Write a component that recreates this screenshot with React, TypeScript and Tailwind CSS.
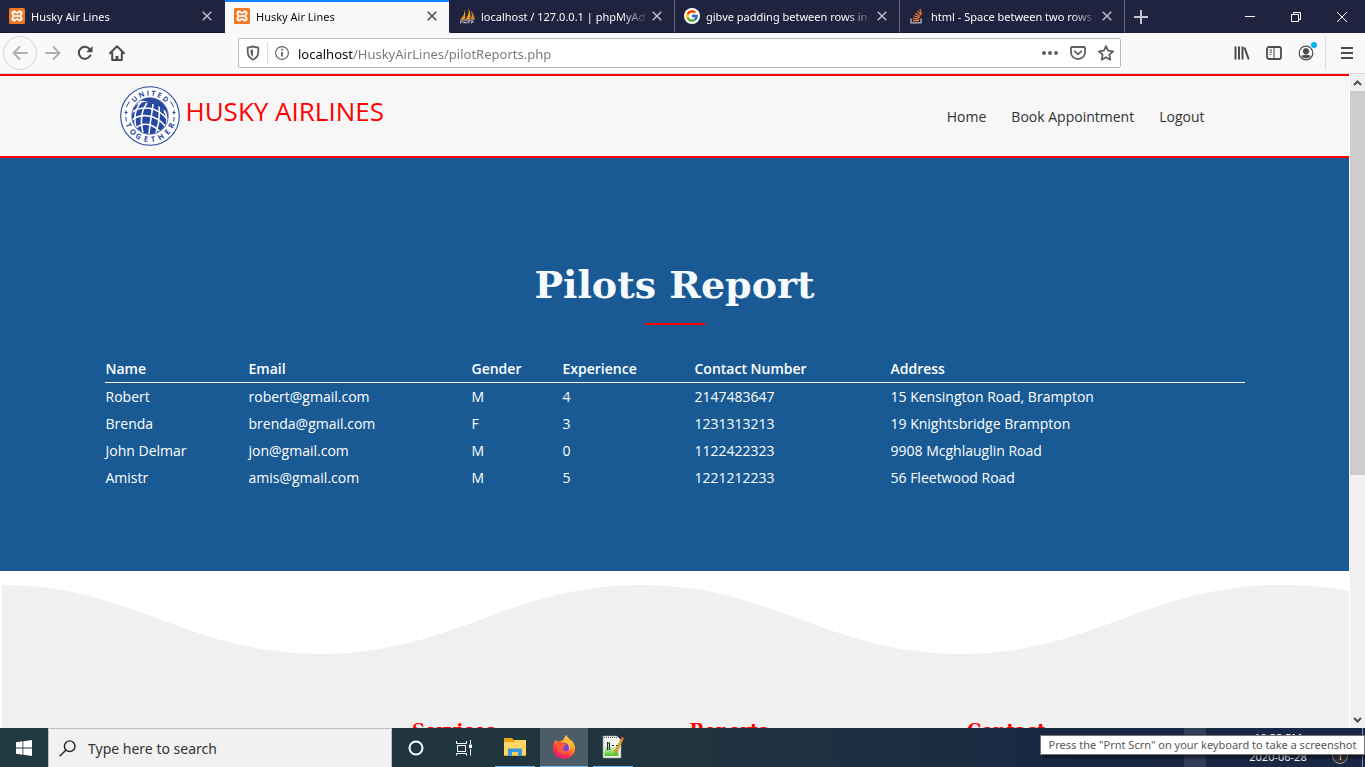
import React from 'react';
import { FcGoogle } from 'react-icons/fc';

type IconProps = { className?: string };

const XamppIcon = () => (
  <svg viewBox="0 0 16 16" className="size-4 shrink-0">
    <rect width="16" height="16" rx="1.500" fill="#f37623" />
    <path
      d="M5.300 3.600c-1.800 0-2.300 1.300-1.700 2.500.4.800 1.200 1 1.200 1.900s-.8 1.100-1.200 1.900c-.6 1.200-.1 2.500 1.700 2.500 1.500 0 1.500-1.500 2.700-1.500s1.200 1.500 2.700 1.500c1.800 0 2.300-1.300 1.700-2.500-.4-.8-1.200-1-1.200-1.900s.8-1.100 1.200-1.900c.6-1.200.1-2.500-1.700-2.500-1.500 0-1.500 1.500-2.700 1.500s-1.200-1.500-2.700-1.500z"
      fill="none"
      stroke="#fff"
      strokeWidth="2"
    />
    <path d="M6 8h4" stroke="#fff" strokeWidth="1.800" />
  </svg>
);

const PhpMyAdminIcon = () => (
  <svg viewBox="0 0 16 16" className="size-4 shrink-0">
    <path d="M5.500 1.500C6 5 4.500 8.500 1 11.500h4.700C6.500 8 6.500 4.500 5.500 1.500z" fill="#f89c0e" />
    <path d="M9.300.3c1.200 4 0 7.700-3 11.200h4.900c.5-4 .3-8-1.900-11.200z" fill="#f89c0e" />
    <path d="M11.800 2.500c1.500 3.300 1.200 6-.1 9h4c-.3-3.500-1.600-6.500-3.900-9z" fill="#c98a3c" />
    <path d="M.5 11.500h15l-1.500 1.300H2z" fill="#9b9bab" />
    <path d="M1.500 15.500v-2h1.800v1.200M5 13.500v2m0-1h2m0-1v2m2 0v-2h1.500v1.200M12.500 15.500v-2H14v1.500" stroke="#b6b6c4" fill="none" />
  </svg>
);

const StackIcon = () => (
  <svg viewBox="0 0 16 16" className="size-4 shrink-0" fill="none">
    <path d="M2 10.500v4.300h10v-4.300" stroke="#bcbbbb" strokeWidth="1.300" />
    <path d="M4 12.700h6M4.100 10.400l5.900.7M4.900 7.800l5.500 1.800M6.300 5.200l4.800 3.200M8.500 2.800l3.500 4.400M11 1l1.500 5.300" stroke="#f48024" strokeWidth="1.200" />
  </svg>
);

const CloseIcon = ({ className = '' }: IconProps) => (
  <svg viewBox="0 0 10 10" className={`size-[10px] ${className}`}>
    <path d="M.7.7l8.600 8.600M9.300.7L.7 9.300" stroke="currentColor" strokeWidth="1.500" />
  </svg>
);

const tabs = [
  { title: 'Husky Air Lines', icon: <XamppIcon /> },
  { title: 'Husky Air Lines', icon: <XamppIcon />, active: true },
  { title: 'localhost / 127.0.0.1 | phpMyAdmin', icon: <PhpMyAdminIcon /> },
  {
    title: 'gibve padding between rows in table',
    icon: (
      <span className="flex size-4 shrink-0 items-center justify-center rounded-full bg-white">
        <FcGoogle size={14} />
      </span>
    ),
  },
  { title: 'html - Space between two rows in a table', icon: <StackIcon /> },
];

const TabBar = () => (
  <div className="flex h-[33px] shrink-0 bg-[#20233f]">
    {tabs.map((tab, i) => (
      <div
        key={i}
        className={`flex w-[225px] min-w-0 items-center gap-[6px] border-b border-r pl-[9px] pr-3 ${
          tab.active
            ? 'border-b-[#f9f9fa] border-r-[#20233f] bg-[#f9f9fa] text-[#0c0c0d] shadow-[inset_0_2px_0_#0a84ff]'
            : 'border-b-[#17192e] text-[#f9f9fa]'
        } ${i > 1 ? 'border-r-[#6a6c80]' : 'border-r-[#20233f]'}`}
      >
        {tab.icon}
        <a
          href="#tab"
          className="min-w-0 flex-1 overflow-hidden whitespace-nowrap pt-px font-['Noto_Sans','Open_Sans',sans-serif] text-[11px] leading-5 [mask-image:linear-gradient(to_right,black_140px,transparent_168px)]"
        >
          {tab.title}
        </a>
        <button aria-label="Close tab" className={tab.active ? 'text-[#4a4a4f]' : 'text-[#b9bac4]'}>
          <CloseIcon />
        </button>
      </div>
    ))}
    <button aria-label="New tab" className="flex w-8 items-center justify-center text-[#c5c6cf]">
      <svg viewBox="0 0 14 14" className="size-[14px]">
        <path d="M7 0v14M0 7h14" stroke="currentColor" strokeWidth="2" />
      </svg>
    </button>
    <div className="ml-auto flex text-white">
      <button aria-label="Minimize" className="flex w-[46px] items-center justify-center">
        <svg viewBox="0 0 10 10" className="size-[10px]"><path d="M0 4.500h10" stroke="currentColor" /></svg>
      </button>
      <button aria-label="Restore" className="flex w-[46px] items-center justify-center">
        <svg viewBox="0 0 10 10" className="size-[10px]" fill="none">
          <path d="M.5 2.500h7v7h-7zM2.500 2.500v-2h7v7h-2" stroke="currentColor" />
        </svg>
      </button>
      <button aria-label="Close window" className="flex w-[46px] items-center justify-center">
        <svg viewBox="0 0 10 10" className="size-[10px]"><path d="M0 0l10 10M10 0L0 10" stroke="currentColor" /></svg>
      </button>
    </div>
  </div>
);

const Toolbar = () => (
  <div className="flex h-[41px] shrink-0 items-center border-b border-[#d8d8da] bg-[#f9f9fa] text-[#4a4a4f]">
    <div className="flex w-[238px] shrink-0 items-center pl-[3px]">
      <button aria-label="Back" className="flex size-[34px] items-center justify-center rounded-full border border-[#d4d4d6] text-[#b0b0b3]">
        <svg viewBox="0 0 16 16" className="size-4" fill="none" stroke="currentColor" strokeWidth="1.900" strokeLinecap="round" strokeLinejoin="round">
          <path d="M15 8H1.500M7.500 2l-6 6 6 6" />
        </svg>
      </button>
      <button aria-label="Forward" className="flex w-8 items-center justify-center text-[#b0b0b3]">
        <svg viewBox="0 0 16 16" className="size-4" fill="none" stroke="currentColor" strokeWidth="1.900" strokeLinecap="round" strokeLinejoin="round">
          <path d="M1 8h13.500M8.500 2l6 6-6 6" />
        </svg>
      </button>
      <button aria-label="Reload" className="flex w-8 items-center justify-center">
        <svg viewBox="0 0 16 16" className="size-4" fill="none">
          <path d="M13.200 10.500A6 6 0 1 1 12.500 4" stroke="currentColor" strokeWidth="2" strokeLinecap="round" />
          <path d="M15.500 1v6.300H9.200z" fill="currentColor" />
        </svg>
      </button>
      <button aria-label="Home" className="flex w-8 items-center justify-center">
        <svg viewBox="0 0 16 16" className="size-4" fill="none" stroke="currentColor" strokeWidth="2" strokeLinecap="round" strokeLinejoin="round">
          <path d="M1 8.200L8 1.300l7 6.900M3.200 8v7h9.600V8" />
          <path d="M8 15v-4" strokeWidth="3" strokeLinecap="butt" />
        </svg>
      </button>
    </div>
    <div className="flex h-[30px] min-w-0 flex-1 items-center rounded-[2px] border border-[#b9b9bb] bg-white text-[#5f5f64]">
      <svg viewBox="0 0 16 16" className="ml-[6px] size-4 shrink-0" fill="none">
        <path d="M8 1.500l5.300 1.100v4.500c0 3.500-2 6-5.300 7.600-3.300-1.600-5.300-4.100-5.300-7.600V2.600z" stroke="currentColor" strokeWidth="1.800" strokeLinejoin="round" />
        <path d="M8 4.500v7.200c-1.600-1-2.500-2.600-2.500-4.600V5z" fill="currentColor" />
      </svg>
      <span className="mx-[6px] h-[22px] w-px shrink-0 bg-[#dcdcde]" />
      <svg viewBox="0 0 16 16" className="size-4 shrink-0" fill="none" stroke="currentColor">
        <circle cx="8" cy="8" r="6.400" strokeWidth="1.100" />
        <path d="M8 7v4.500" strokeWidth="1.800" />
        <circle cx="8" cy="4.700" r=".6" fill="currentColor" />
      </svg>
      <input
        aria-label="Address"
        defaultValue="localhost/HuskyAirLines/pilotReports.php"
        className="ml-2 h-6 min-w-0 flex-1 bg-[linear-gradient(to_right,#0c0c0d_55px,#77777b_55px)] bg-clip-text pt-px font-['Noto_Sans','Open_Sans',sans-serif] text-[13px] text-transparent outline-none"
      />
      <div className="flex items-center gap-3 pr-[6px]">
        <button aria-label="Page actions">
          <svg viewBox="0 0 16 16" className="size-4" fill="currentColor"><circle cx="2" cy="8" r="2" /><circle cx="8" cy="8" r="2" /><circle cx="14" cy="8" r="2" /></svg>
        </button>
        <button aria-label="Save to Pocket">
          <svg viewBox="0 0 16 16" className="size-4" fill="none" stroke="currentColor" strokeWidth="1.800" strokeLinecap="round" strokeLinejoin="round">
            <path d="M2 2h12c.7 0 1 .4 1 1v4.500a7 6.500 0 0 1-14 0V3c0-.6.3-1 1-1z" /><path d="M4.800 6.300L8 9.300l3.200-3" />
          </svg>
        </button>
        <button aria-label="Bookmark">
          <svg viewBox="0 0 16 16" className="size-4" fill="none" stroke="currentColor" strokeWidth="1.800" strokeLinejoin="round">
            <path d="M8 1l2.100 4.700 5 .6-3.700 3.400.9 5.100L8 12.300l-4.300 2.500.9-5.100L.9 6.300l5-.6z" />
          </svg>
        </button>
      </div>
    </div>
    <div className="flex h-full w-[244px] shrink-0 items-center justify-end">
      <div className="flex items-center gap-4 pr-[11px]">
        <button aria-label="Library">
          <svg viewBox="0 0 16 16" className="size-4" stroke="currentColor" strokeWidth="2">
            <path d="M1.500 1.500v13M5 1.500v13M8.500 1.500v13M10.500 2.500l4.200 11.800" />
          </svg>
        </button>
        <button aria-label="Sidebars">
          <svg viewBox="0 0 16 16" className="size-4" fill="none" stroke="currentColor">
            <rect x="1" y="2" width="14" height="12" rx="2" strokeWidth="1.800" /><path d="M8 2v12M3.500 5H6M3.500 7.200H6M3.500 9.400h1.800" />
          </svg>
        </button>
        <button aria-label="Account" className="relative">
          <svg viewBox="0 0 16 16" className="size-4" fill="none" stroke="currentColor">
            <circle cx="8" cy="8" r="6.800" strokeWidth="1.200" /><circle cx="8" cy="6.300" r="2.700" fill="currentColor" /><path d="M3.800 11.300c1-1.500 7.400-1.500 8.400 0-1.500 2-6.900 2-8.400 0z" fill="currentColor" />
          </svg>
          <span className="absolute -right-[3px] -top-[3px] size-[6px] rounded-full bg-[#00b3f4]" />
        </button>
      </div>
      <span className="h-[34px] w-px bg-[#dcdcde]" />
      <button aria-label="Menu" className="flex w-[39px] items-center justify-center pl-[3px]">
        <svg viewBox="0 0 12 12" className="size-3" stroke="currentColor" strokeWidth="2"><path d="M0 1h12M0 6h12M0 11h12" /></svg>
      </button>
    </div>
  </div>
);

const Logo = () => (
  <svg viewBox="0 0 60 60" className="size-[60px] shrink-0" role="img" aria-label="United Together">
    <defs>
      <path id="arc-top" d="M9.500 30a20.500 20.500 0 0 1 41 0" />
      <path id="arc-bottom" d="M4 30a26 26 0 0 0 52 0" />
      <clipPath id="globe"><circle cx="30" cy="30" r="18" /></clipPath>
    </defs>
    <circle cx="30" cy="30" r="29.300" fill="#fff" stroke="#2747a0" strokeWidth="1.100" />
    <g fontWeight="700" fill="#2747a0" className="font-['Open_Sans',sans-serif]">
      <text fontSize="7" textAnchor="middle"><textPath href="#arc-top" startOffset="50%">U N I T E D</textPath></text>
      <text fontSize="7.500" textAnchor="middle"><textPath href="#arc-bottom" startOffset="50%">T&#160; O G&#160; E&#160; T&#160; H&#160; E&#160; R</textPath></text>
    </g>
    <path d="M9.300 15.500l-3 5.500M6 24.500v4M5.800 31l.5 4.500M50.700 15.500l3 5.500M54 24.500v4M54.200 31l-.5 4.500M4.500 26.500h3M52.500 26.500h3" stroke="#2747a0" strokeWidth="1" />
    <g clipPath="url(#globe)">
      <circle cx="30" cy="30" r="18.500" fill="#2747a0" />
      <g fill="none" stroke="#fff">
        <path d="M13 20c9-8 25-7 34 6" strokeWidth="2.200" />
        <path d="M11 27c10-8 26-7 37 7M12 34c9-7 24-6 34 7M16 42c7-6 17-5 25 5" strokeWidth="1.600" />
        <path d="M21 16c-6 7-8 17-4 29M27 17c-6 8-7 18-4 30M33 18c-1 9-3 19-4 30M39 20c1 9 0 18-3 27M44 24c4 7 4 14 0 22" strokeWidth="1.600" />
      </g>
      <path d="M18 14c12-6 28 1 30 14-7-9-17-12-30-14z" fill="#2747a0" />
    </g>
    <circle cx="30" cy="30" r="18.300" fill="none" stroke="#2747a0" strokeWidth=".7" />
  </svg>
);

const pilots = [
  ['Robert', 'robert@gmail.com', 'M', '4', '2147483647', '15 Kensington Road, Brampton'],
  ['Brenda', 'brenda@gmail.com', 'F', '3', '1231313213', '19 Knightsbridge Brampton'],
  ['John Delmar', 'jon@gmail.com', 'M', '0', '1122422323', '9908 Mcghlauglin Road'],
  ['Amistr', 'amis@gmail.com', 'M', '5', '1221212233', '56 Fleetwood Road'],
];

const Page = () => (
  <div className="min-w-0 flex-1 overflow-hidden bg-white font-['Open_Sans',sans-serif] text-[14px]">
    <header className="border-y-2 border-[#ff0000] bg-[#f7f7f7]">
      <div className="mx-auto flex h-20 max-w-[1140px] items-center justify-between pl-[15px] pr-10">
        <a href="#home" className="flex gap-[6px] text-[26px] font-medium leading-[50px] text-[#ff0000]">
          <Logo />
          HUSKY AIRLINES
        </a>
        <nav className="flex gap-[25px] text-[#333]">
          <a href="#home">Home</a>
          <a href="#book">Book Appointment</a>
          <a href="#logout">Logout</a>
        </nav>
      </div>
    </header>
    <main className="bg-[#195a94] px-4 pb-20 pt-[102px]">
      <div className="mx-auto max-w-[1140px]">
        <h1 className="text-center font-['DejaVu_Serif',serif] text-[38px] font-bold leading-[50px] text-[#f5faff]">Pilots Report</h1>
        <div className="mx-auto mt-[13px] h-[2px] w-[60px] bg-[#ff0000]" />
        <table className="mt-[30px] w-full table-fixed text-left leading-[27px] text-white">
          <colgroup>
            <col className="w-[143px]" />
            <col className="w-[223px]" />
            <col className="w-[91px]" />
            <col className="w-[132px]" />
            <col className="w-[196px]" />
            <col />
          </colgroup>
          <thead>
            <tr className="border-b border-white">
              {['Name', 'Email', 'Gender', 'Experience', 'Contact Number', 'Address'].map((h) => (
                <th key={h} className="px-px py-0 font-semibold">{h}</th>
              ))}
            </tr>
          </thead>
          <tbody>
            {pilots.map((p) => (
              <tr key={p[0]}>{p.map((c, i) => <td key={i} className="px-px py-0">{c}</td>)}</tr>
            ))}
          </tbody>
        </table>
      </div>
    </main>
    <footer>
      <svg viewBox="0 0 1349 84" preserveAspectRatio="none" className="block h-[84px] w-full">
        <path d="M2 84V14C132 14 188 83 320 83C452 83 509 14 641 14C773 14 829 83 961 83C1093 83 1149 14 1281 14C1306 14 1328 16 1349 20V84z" fill="#f0f0f0" />
      </svg>
      <div className="ml-[2px] h-60 bg-[#f0f0f0] pt-16">
        <div className="mx-auto grid max-w-[1110px] grid-cols-4 font-['DejaVu_Serif',serif] text-[18px] font-bold leading-6 text-[#ff0000]">
          <h2 className="col-start-2 pl-[14px]">Services</h2>
          <h2 className="pl-[14px]">Reports</h2>
          <h2 className="pl-[14px]">Contact</h2>
        </div>
      </div>
    </footer>
  </div>
);

const ScrollBar = () => (
  <div className="flex w-4 shrink-0 flex-col items-center border-l border-white bg-[#f0f0f0] text-[#505050]">
    <span className="flex h-[17px] items-center">
      <svg viewBox="0 0 9 6" className="h-[6px] w-[9px]" fill="none"><path d="M1 5l3.500-3.500L8 5" stroke="currentColor" strokeWidth="2" /></svg>
    </span>
    <span className="h-[384px] w-full bg-[#cdcdcd]" />
    <span className="mt-auto flex h-[17px] items-center">
      <svg viewBox="0 0 9 6" className="h-[6px] w-[9px]" fill="none"><path d="M1 1l3.500 3.500L8 1" stroke="currentColor" strokeWidth="2" /></svg>
    </span>
  </div>
);

const TaskBar = () => (
  <div className="relative flex h-[39px] shrink-0 bg-[linear-gradient(to_right,#21383f,#20353f_50%,#1a2943_75%,#1a2748)] font-['Noto_Sans','Open_Sans',sans-serif] text-white">
    <button aria-label="Start" className="flex w-12 items-center justify-center">
      <svg viewBox="0 0 16 16" className="size-4" fill="#fff"><path d="M0 2.200l6.500-.9v6.200H0zM7.300 1.200L16 0v7.500H7.300zM0 8.400h6.500v6.300L0 13.800zM7.300 8.400H16V16l-8.700-1.200z" /></svg>
    </button>
    <label className="flex w-[344px] items-center gap-3 border border-b-0 border-[#c0c0c0] bg-[#f1f1f1] pl-[10px] text-[#222]">
      <svg viewBox="0 0 17 17" className="size-[17px] shrink-0" fill="none" stroke="currentColor" strokeWidth="1.400">
        <circle cx="10.700" cy="6.200" r="5.300" /><path d="M7 10L.7 16.300" />
      </svg>
      <input aria-label="Search" placeholder="Type here to search" className="min-w-0 flex-1 bg-transparent text-[14px] outline-none placeholder:text-[#333]" />
    </label>
    <button aria-label="Cortana" className="flex w-12 items-center justify-center">
      <svg viewBox="0 0 16 16" className="size-4"><circle cx="8" cy="8" r="6.500" fill="none" stroke="#fff" strokeWidth="2" /></svg>
    </button>
    <button aria-label="Task View" className="flex w-12 items-center justify-center">
      <svg viewBox="0 0 16 16" className="size-4" fill="none" stroke="#fff">
        <path d="M.5 1v2.500h10V1M.5 15.500v-2h10v2M1.500 5.500h8v6h-8zM14.500 0v4M14.500 9v6.500" /><rect x="13.500" y="5" width="2" height="2.500" fill="#fff" />
      </svg>
    </button>
    <button aria-label="File Explorer" className="ml-[7px] mr-[5px] flex w-10 items-center justify-center border-b border-[#76b9ed]">
      <svg viewBox="0 0 22 18" className="h-[18px] w-[22px]">
        <path d="M0 0h8l2 2h12v16H0z" fill="#e8a50c" /><path d="M0 4h10l1-2h11v15H0z" fill="#fdd664" /><path d="M4 18v-7.500h14V18h-4v-4H8v4z" fill="#3a96dd" />
      </svg>
    </button>
    <button aria-label="Firefox" className="flex w-12 items-center justify-center border-b border-[#76b9ed] bg-[#4c5d67]">
      <svg viewBox="0 0 24 24" className="size-6">
        <defs>
          <linearGradient id="fox" x1=".8" y1="0" x2=".25" y2="1"><stop offset="0" stopColor="#fff14a" /><stop offset=".4" stopColor="#ff9a1f" /><stop offset=".7" stopColor="#ff3647" /><stop offset="1" stopColor="#e31587" /></linearGradient>
        </defs>
        <path d="M14.500 0c.8 2.500 3 3.500 4.500 5.500 1.500.2 4 4 4 8A11 10.500 0 0 1 1 13.500C1 10 2 7 4 4.500l1 2.300 3-.3c1-1 2.500-1.500 3.500-1.500.5-2 1.500-4 3-5z" fill="url(#fox)" />
        <circle cx="12.500" cy="12.500" r="4.600" fill="#7542e5" />
        <path d="M5 7c3-1.500 5.500 0 7 2l2.500.5c-.5 2-3 1.800-3.500 3.500-.8 2.500 2.500 4.500 5.500 2.500-1.500 4-8 4.500-10.500.5C4 13 4 10 5 7z" fill="#ff5a34" />
        <path d="M14.500 1c.5 3 4.500 5 4.500 9 0 3-1 4-2 5 .5-5-1.500-6.500-4-8 0-2 0-4 1.500-6z" fill="#ffbd3c" />
      </svg>
    </button>
    <button aria-label="Notepad++" className="ml-[5px] flex w-10 items-center justify-center border-b border-[#76b9ed]">
      <svg viewBox="0 0 22 24" className="h-6 w-[22px]">
        <defs><linearGradient id="pad" x1="0" y1="0" x2="0" y2="1"><stop offset=".4" stopColor="#f4f8ee" /><stop offset="1" stopColor="#4bc510" /></linearGradient></defs>
        <path d="M1 1h14l4 4v18H1z" fill="#f8f8f8" stroke="#85908a" strokeWidth=".7" /><path d="M2.500 4h14v17h-14z" fill="url(#pad)" />
        <path d="M2 2.500h13" stroke="#555" strokeDasharray="1 1" /><path d="M5.500 7v8M5.500 8h2v7M10 10.500h2M14 10.500h2" stroke="#263329" strokeWidth="1.200" fill="none" />
        <path d="M20 2l2 1-7 14-2.500 2 .3-3.300z" fill="#e5a923" stroke="#8d5a10" strokeWidth=".4" /><path d="M20 2l2 1-1 2-2-1z" fill="#dc5449" />
      </svg>
    </button>
    <div className="ml-auto flex">
      <span className="w-[22px] bg-white/10" />
      <div className="flex w-36 flex-col items-center justify-between py-px text-[11px] leading-[18px]">
        <span>10:38 PM</span>
        <span>2020-06-28</span>
      </div>
      <button aria-label="Notifications" className="-ml-[18px] flex w-[30px] items-end pb-[3px]">
        <span className="flex size-4 items-center justify-center rounded-full border border-[#a0a0a0] bg-[#333] text-[10px]">1</span>
      </button>
      <span className="mr-[2px] w-px bg-white/50" />
    </div>
    <div role="tooltip" className="absolute right-0 top-[7px] flex h-5 w-[325px] items-center justify-center whitespace-nowrap border border-[#767676] bg-white text-[11px] text-[#575757] shadow-[3px_3px_3px_rgba(0,0,0,0.5)]">
      Press the "Prnt Scrn" on your keyboard to take a screenshot
    </div>
  </div>
);

export default function App() {
  return (
    <div className="flex h-screen flex-col overflow-hidden">
      <TabBar />
      <Toolbar />
      <div className="flex min-h-0 flex-1">
        <Page />
        <ScrollBar />
      </div>
      <TaskBar />
    </div>
  );
}
